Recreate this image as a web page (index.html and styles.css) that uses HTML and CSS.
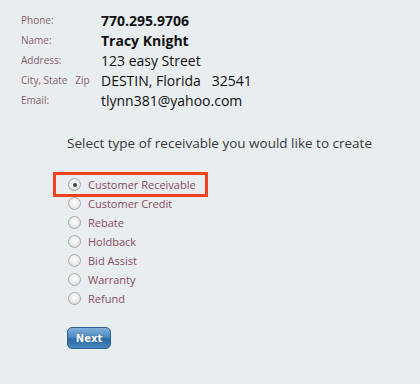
FILE: index.html
```html
<!DOCTYPE html>
<html>
<head>
<meta charset="utf-8">
<link rel="stylesheet" href="styles.css">
</head>
<body>
<div class="page">
  <div class="info">
    <div class="lbl">Phone:</div><div class="val bold">770.295.9706</div>
    <div class="lbl">Name:</div><div class="val bold">Tracy Knight</div>
    <div class="lbl">Address:</div><div class="val">123 easy Street</div>
    <div class="lbl">City, State&nbsp;&nbsp; Zip</div><div class="val">DESTIN, Florida&nbsp;&nbsp; 32541</div>
    <div class="lbl">Email:</div><div class="val">tlynn381@yahoo.com</div>
  </div>
  <h2 class="title">Select type of receivable you would like to create</h2>
  <div class="options">
    <label class="opt selected"><span class="radio checked"></span>Customer Receivable</label>
    <label class="opt"><span class="radio"></span>Customer Credit</label>
    <label class="opt"><span class="radio"></span>Rebate</label>
    <label class="opt"><span class="radio"></span>Holdback</label>
    <label class="opt"><span class="radio"></span>Bid Assist</label>
    <label class="opt"><span class="radio"></span>Warranty</label>
    <label class="opt"><span class="radio"></span>Refund</label>
  </div>
  <button class="next">Next</button>
</div>
</body>
</html>
```
FILE: styles.css
```css
html, body {
  margin: 0;
  padding: 0;
  background: #e8edf0;
  width: 420px;
  height: 384px;
  overflow: hidden;
}
.page {
  font-family: "Open Sans", sans-serif;
  padding: 10px 0 0 21px;
}
.info {
  display: grid;
  grid-template-columns: 80px auto;
  grid-auto-rows: 20px;
  align-items: center;
}
.lbl {
  font-size: 10px;
  color: #8a5d6c;
  white-space: nowrap;
}
.val {
  font-size: 14px;
  color: #111;
}
.val.bold {
  font-weight: 700;
}
.title {
  font-size: 13.5px;
  font-weight: 400;
  color: #3a3a3a;
  margin: 23px 0 0 46px;
  line-height: 20px;
}
.options {
  margin: 22px 0 0 35px;
  display: flex;
  flex-direction: column;
  align-items: flex-start;
}
.opt {
  display: flex;
  align-items: center;
  height: 19px;
  font-size: 11px;
  color: #8a4a60;
  padding-left: 12px;
  box-sizing: border-box;
}
.opt.selected {
  outline: 3px solid #f0441f;
  width: 149px;
}
.radio {
  width: 13px;
  height: 13px;
  border-radius: 50%;
  border: 1px solid #a8a8a8;
  background: radial-gradient(circle at 50% 40%, #ffffff 0%, #e8e8e8 60%, #cfcfcf 100%);
  margin-right: 7px;
  box-sizing: border-box;
  position: relative;
  flex: none;
}
.radio.checked::after {
  content: "";
  position: absolute;
  left: 3.5px;
  top: 3.5px;
  width: 4px;
  height: 4px;
  border-radius: 50%;
  background: #444;
}
.next {
  margin: 19px 0 0 46px;
  width: 44px;
  height: 22px;
  border: 1px solid #2f5f8f;
  border-radius: 5px;
  background: linear-gradient(#7fb0d8 0%, #4f8cc0 45%, #2a6aa6 55%, #4a86bc 100%);
  color: #fff;
  font-family: "DejaVu Sans", sans-serif;
  font-weight: 700;
  font-size: 10px;
  padding: 0;
  text-shadow: 0 0 1px #1c4a78;
}
```
